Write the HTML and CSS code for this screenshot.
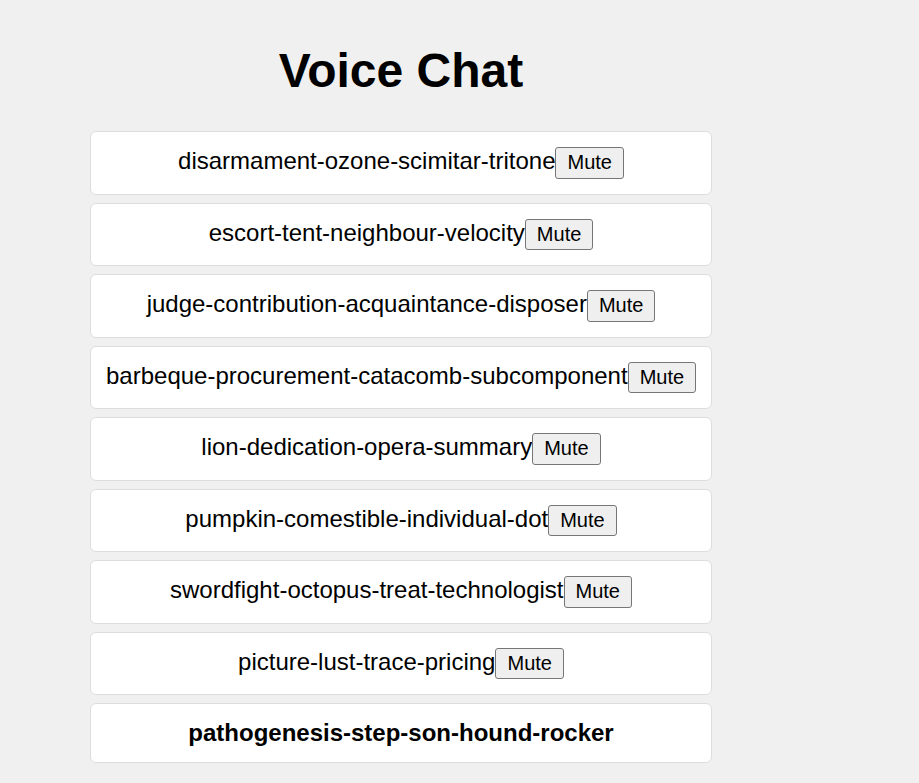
FILE: index.html
```html
<!DOCTYPE html>
<html>
<head>
<meta charset="utf-8">
<link rel="stylesheet" href="styles.css">
</head>
<body>
<div class="app">
  <h1 class="title">Voice Chat</h1>
  <ul class="list">
    <li class="card"><span class="name">disarmament-ozone-scimitar-tritone</span><button class="mute">Mute</button></li>
    <li class="card"><span class="name">escort-tent-neighbour-velocity</span><button class="mute">Mute</button></li>
    <li class="card"><span class="name">judge-contribution-acquaintance-disposer</span><button class="mute">Mute</button></li>
    <li class="card"><span class="name">barbeque-procurement-catacomb-subcomponent</span><button class="mute">Mute</button></li>
    <li class="card"><span class="name">lion-dedication-opera-summary</span><button class="mute">Mute</button></li>
    <li class="card"><span class="name">pumpkin-comestible-individual-dot</span><button class="mute">Mute</button></li>
    <li class="card"><span class="name">swordfight-octopus-treat-technologist</span><button class="mute">Mute</button></li>
    <li class="card"><span class="name">picture-lust-trace-pricing</span><button class="mute">Mute</button></li>
    <li class="card self"><span class="name">pathogenesis-step-son-hound-rocker</span></li>
  </ul>
</div>
</body>
</html>
```

FILE: styles.css
```css
html, body {
  background: #f0f0f0;
}
body {
  margin: 0;
  font-family: "Liberation Sans", Arial, sans-serif;
  color: #000;
}
.app {
  width: 622px;
  margin-left: 90px;
  padding-top: 1px;
}
.title {
  text-align: center;
  font-size: 48px;
  font-weight: bold;
  margin: 42px 0 33px;
  line-height: 55px;
}
.list {
  list-style: none;
  margin: 0;
  padding: 0;
  display: flex;
  flex-direction: column;
  gap: 8px;
}
.card {
  background: #fff;
  border: 1px solid #ddd;
  border-radius: 6px;
  padding: 15px;
  text-align: center;
  font-size: 24px;
  white-space: nowrap;
}
.card.self {
  font-weight: bold;
}
.mute {
  font-family: "Liberation Sans", Arial, sans-serif;
  font-size: 20px;
  padding: 3.25px 11px;
  background: #efefef;
  border: 1px solid #767676;
  border-radius: 3px;
  color: #000;
}
```
